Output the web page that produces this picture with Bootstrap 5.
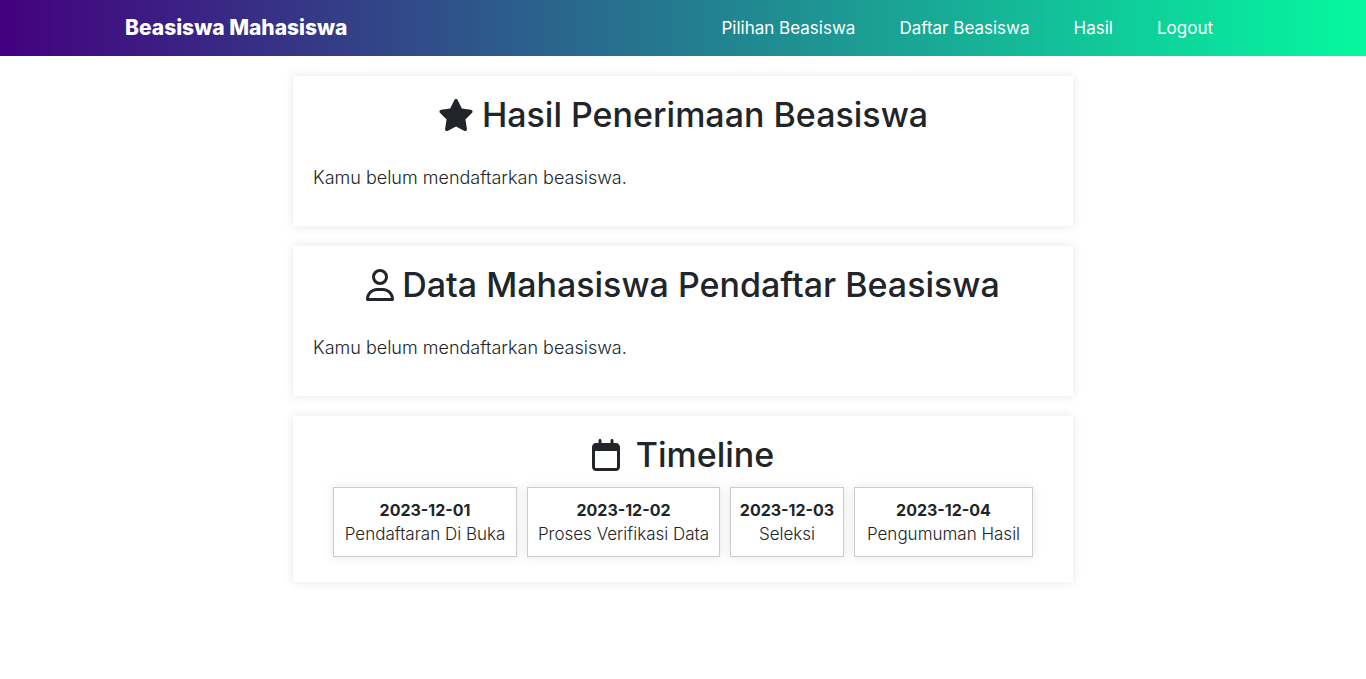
<!DOCTYPE html>
<html lang="id">
<head>
<meta charset="utf-8">
<meta name="viewport" content="width=device-width, initial-scale=1">
<title>Beasiswa Mahasiswa</title>
<link href="https://cdn.jsdelivr.net/npm/bootstrap@5.3.0/dist/css/bootstrap.min.css" rel="stylesheet">
<style>
body { font-family: Inter, sans-serif; font-size: 17px; line-height: 24px; font-weight: 300; background: #fff; }
.site-bar { background: linear-gradient(to right, #43007f, #05f8a0); min-height: 56px; }
.site-bar .navbar-brand { font-size: 21px; font-weight: 800; }
.site-bar .nav-link { color: #fff; font-weight: 400; }
.site-bar .navbar-nav { column-gap: 28px; padding-right: 20px; }
.panel { background: #fff; padding: 20px; box-shadow: 0 0 10px rgba(0, 0, 0, .1); }
.panel-stack { max-width: 780px; gap: 20px; margin-top: 20px; margin-bottom: 20px; }
.panel h2 { font-size: 34px; line-height: 38px; font-weight: 500; }
.panel h2 svg { height: 32px; flex: none; }
.panel p { font-size: 18px; }
.steps { display: grid; grid-template-columns: 184fr 193fr 114fr 179fr; gap: 10px; margin: 13px 20px 5px; }
.step { border: 1px solid #ccc; padding: 10px 0; text-align: center; background: #fff; box-shadow: 0 0 10px rgba(0, 0, 0, .1); }
.step strong { font-size: 16px; font-weight: 700; }
@media (max-width: 767px) { .steps { grid-template-columns: 1fr; } }
</style>
</head>
<body>
<nav class="navbar navbar-expand-lg navbar-dark site-bar py-0">
  <div class="container">
    <a class="navbar-brand" href="#">Beasiswa Mahasiswa</a>
    <button class="navbar-toggler" type="button" data-bs-toggle="collapse" data-bs-target="#menu" aria-controls="menu" aria-label="Menu"><span class="navbar-toggler-icon"></span></button>
    <div class="collapse navbar-collapse" id="menu">
      <ul class="navbar-nav ms-auto">
        <li class="nav-item"><a class="nav-link" href="#">Pilihan Beasiswa</a></li>
        <li class="nav-item"><a class="nav-link" href="#">Daftar Beasiswa</a></li>
        <li class="nav-item"><a class="nav-link" href="#">Hasil</a></li>
        <li class="nav-item"><a class="nav-link" href="#">Logout</a></li>
      </ul>
    </div>
  </div>
</nav>
<main class="panel-stack mx-auto d-flex flex-column">
  <section class="panel">
    <h2 class="d-flex justify-content-center align-items-center gap-2 mb-0">
      <svg viewBox="0 0 576 512" fill="currentColor" aria-hidden="true"><path d="M316.9 18C311.6 7 300.4 0 288.1 0s-23.4 7-28.8 18L195 150.3 51.4 171.5c-12 1.8-22 10.2-25.700 21.700s-.7 24.200 7.900 32.700L137.800 329 113.200 474.700c-2 12 3 24.200 12.900 31.300s23 8 33.800 2.300l128.300-68.500 128.300 68.500c10.800 5.700 23.900 4.900 33.800-2.300s14.900-19.300 12.900-31.300L438.500 329 542.700 225.900c8.600-8.500 11.700-21.200 7.900-32.700s-13.700-19.900-25.700-21.700L381.200 150.300 316.900 18z"/></svg>
      Hasil Penerimaan Beasiswa
    </h2>
    <p class="mt-4 mb-3 pt-2">Kamu belum mendaftarkan beasiswa.</p>
  </section>
  <section class="panel">
    <h2 class="d-flex justify-content-center align-items-center gap-2 mb-0">
      <svg viewBox="0 0 448 512" fill="currentColor" aria-hidden="true"><path d="M304 128a80 80 0 1 0 -160 0 80 80 0 1 0 160 0zM96 128a128 128 0 1 1 256 0A128 128 0 1 1 96 128zM49.3 464H398.700c-8.900-63.300-63.300-112-129-112H178.300c-65.700 0-120.100 48.700-129 112zM0 482.300C0 383.800 79.800 304 178.300 304h91.400C368.200 304 448 383.800 448 482.300c0 16.400-13.300 29.700-29.700 29.700H29.700C13.300 512 0 498.700 0 482.300z"/></svg>
      Data Mahasiswa Pendaftar Beasiswa
    </h2>
    <p class="mt-4 mb-3 pt-2">Kamu belum mendaftarkan beasiswa.</p>
  </section>
  <section class="panel">
    <h2 class="d-flex justify-content-center align-items-center gap-3 mb-0">
      <svg viewBox="0 0 448 512" fill="currentColor" aria-hidden="true"><path d="M152 24c0-13.300-10.700-24-24-24s-24 10.700-24 24V64H64C28.700 64 0 92.700 0 128V448c0 35.300 28.700 64 64 64H384c35.300 0 64-28.700 64-64V128c0-35.300-28.700-64-64-64H344V24c0-13.300-10.700-24-24-24s-24 10.700-24 24V64H152V24zM48 192H400V448c0 8.800-7.200 16-16 16H64c-8.800 0-16-7.200-16-16V192z"/></svg>
      Timeline
    </h2>
    <div class="steps">
      <div class="step"><strong>2023-12-01</strong><br>Pendaftaran Di Buka</div>
      <div class="step"><strong>2023-12-02</strong><br>Proses Verifikasi Data</div>
      <div class="step"><strong>2023-12-03</strong><br>Seleksi</div>
      <div class="step"><strong>2023-12-04</strong><br>Pengumuman Hasil</div>
    </div>
  </section>
</main>
<script src="https://cdn.jsdelivr.net/npm/bootstrap@5.3.0/dist/js/bootstrap.bundle.min.js"></script>
</body>
</html>
